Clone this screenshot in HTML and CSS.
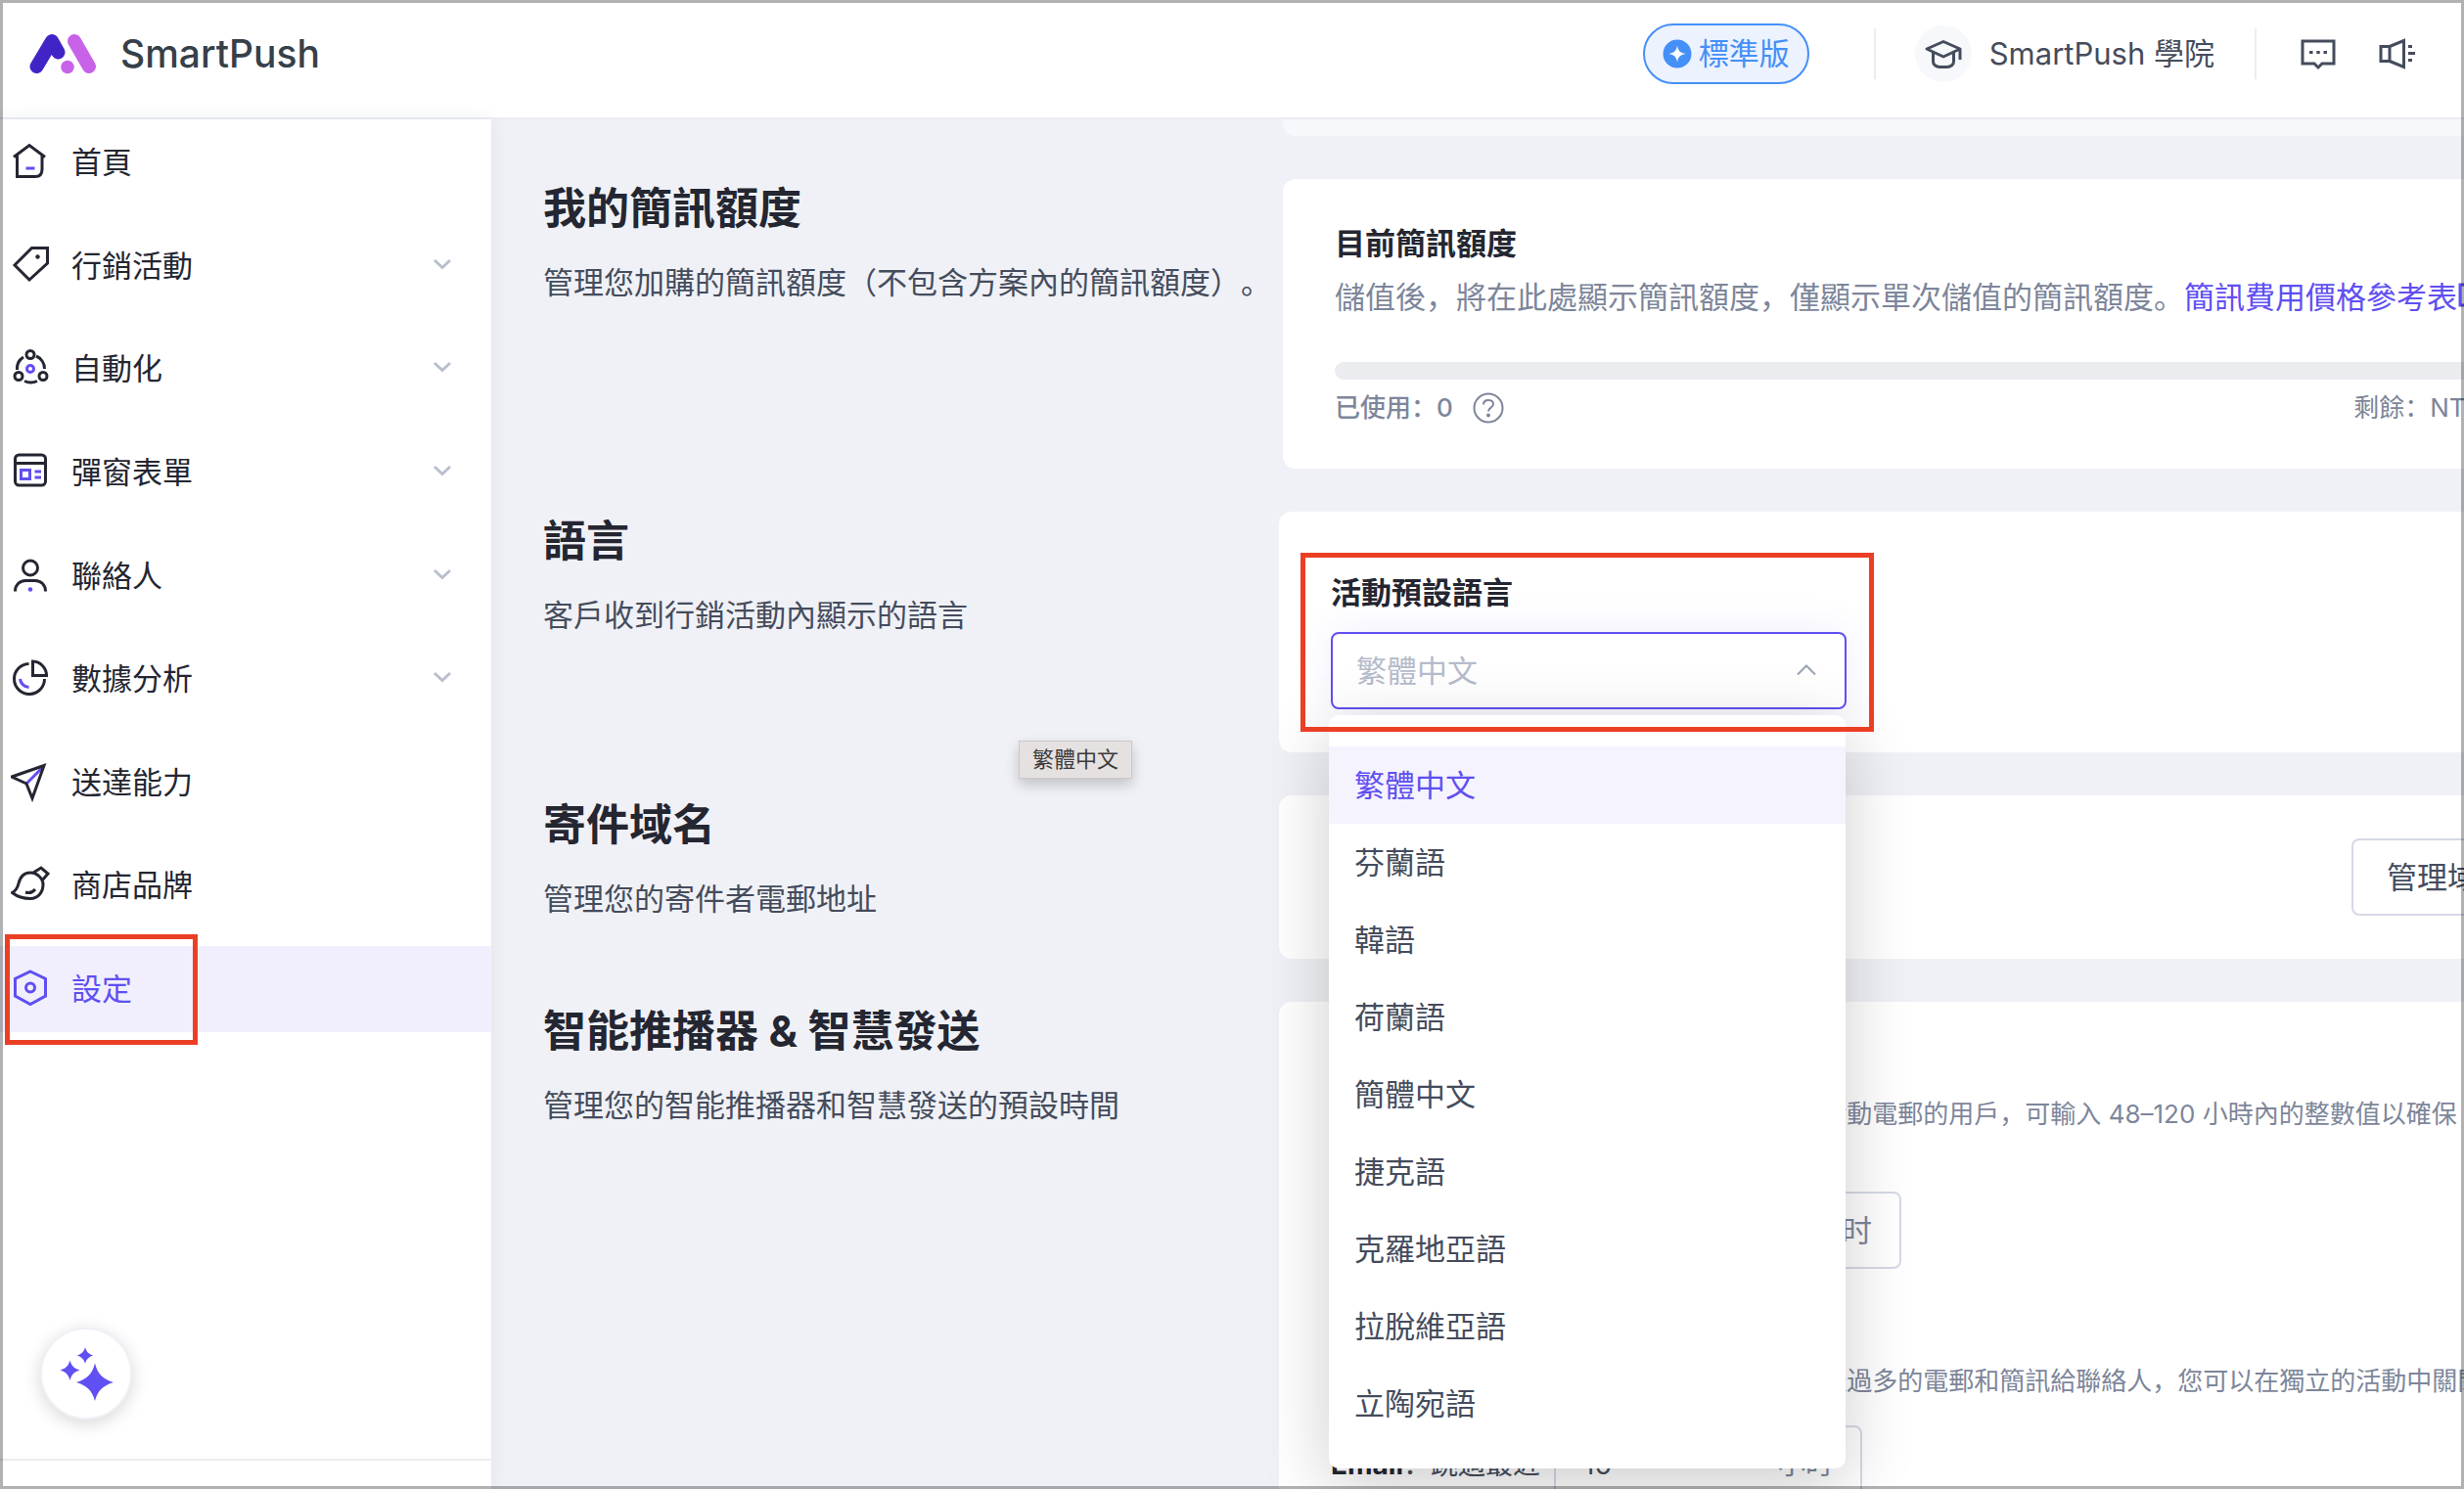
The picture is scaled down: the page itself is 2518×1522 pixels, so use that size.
FILE: index.html
```html
<!DOCTYPE html>
<html lang="zh-Hant">
<head>
<meta charset="utf-8">
<title>SmartPush 設定</title>
<link rel="stylesheet" href="styles.css">
</head>
<body>
<div class="app">
  <header class="topbar">
    <a class="brand" href="#">
      <svg class="brand-mark" width="68" height="42" viewBox="0 0 68 42" fill="none" stroke-width="14" stroke-linecap="round" stroke-linejoin="round" aria-hidden="true">
        <path d="M46 8 61 34" stroke="#c862e8"/><circle cx="39" cy="34.500" r="6.800" fill="#c862e8"/>
        <path d="M7.500 34 23 8 29.500 19.500" stroke="#4224c6"/>
      </svg>
      <span class="brand-name">SmartPush</span>
    </a>
    <div class="topbar-tools">
      <button class="plan" type="button">
        <svg width="30" height="30" viewBox="0 0 30 30" aria-hidden="true"><circle cx="15" cy="15" r="14.500" fill="#458ff8"/><path d="M15 6.500C16 12 18 14 23.500 15 18 16 16 18 15 23.500 14 18 12 16 6.500 15 12 14 14 12 15 6.500Z" fill="#fff"/></svg>
        標準版
      </button>
      <span class="divider"></span>
      <a class="academy" href="#">
        <span class="academy-icon">
          <svg width="40" height="32" viewBox="0 0 40 32" fill="none" stroke="#454c5c" stroke-width="3" stroke-linejoin="round" aria-hidden="true"><path d="M20 3.500 37 11 20 19 3 11ZM37 11V22M9.500 15V24C9.500 27.500 13 29.500 16 29.500H24C27 29.500 30.500 27.500 30.500 24V15"/></svg>
        </span>
        SmartPush 學院
      </a>
      <span class="divider"></span>
      <button class="icon-button" type="button" aria-label="訊息">
        <svg width="38" height="34" viewBox="0 0 38 34" fill="none" stroke="#454c5c" stroke-width="3" aria-hidden="true"><path d="M3 4H35V27H23L19 31 15 27H3Z"/><path d="M10 15.500H13.500M17.300 15.500H20.700M24.500 15.500H28"/></svg>
      </button>
      <button class="icon-button" type="button" aria-label="公告">
        <svg width="40" height="34" viewBox="0 0 40 34" fill="none" stroke="#454c5c" stroke-width="3" aria-hidden="true"><path d="M3 9.500H12V24.500H3ZM12 9.500 26.500 3.500V30.500L12 24.500"/><path d="M31 9.500H35M31 16.500H38M31 23.500H35"/></svg>
      </button>
    </div>
  </header>

  <div class="body">
    <aside class="sidebar">
      <nav class="nav">
        <a class="nav-item" href="#">
          <svg class="nav-icon" viewBox="0 0 40 40"><path d="M3 14.500 19 2.500 35 14.500M6.500 12.500V34.500H25Q32 34.500 32 27V12.500"/><path class="accent" d="M15.500 26H24.500"/></svg>
          首頁
        </a>
        <a class="nav-item" href="#">
          <svg class="nav-icon" viewBox="0 0 40 40"><path d="M21.500 1.500H37.500V17L19 34 4 19Z"/><circle class="dot" cx="27.500" cy="10.500" r="2.200"/></svg>
          行銷活動
          <svg class="chevron" viewBox="0 0 20 12"><path d="M2 2 10 9.500 18 2"/></svg>
        </a>
        <a class="nav-item" href="#">
          <svg class="nav-icon" viewBox="0 0 40 40"><circle cx="20" cy="5.500" r="4"/><circle cx="8" cy="27.500" r="4"/><circle cx="33" cy="27.500" r="4"/><path d="M13 8A14 14 0 0 0 6.500 21M26 7A14 14 0 0 1 34.500 20M14 32.500A15 15 0 0 0 27 32.500"/><circle class="accent" cx="20" cy="20" r="3.500"/></svg>
          自動化
          <svg class="chevron" viewBox="0 0 20 12"><path d="M2 2 10 9.500 18 2"/></svg>
        </a>
        <a class="nav-item" href="#">
          <svg class="nav-icon" viewBox="0 0 40 40"><rect x="4.500" y="2" width="31" height="31" rx="4"/><path d="M5 10.500H35"/><rect class="accent" x="10.500" y="17.500" width="9" height="9"/><path class="accent" d="M24.500 19H31M24.500 25H31"/></svg>
          彈窗表單
          <svg class="chevron" viewBox="0 0 20 12"><path d="M2 2 10 9.500 18 2"/></svg>
        </a>
        <a class="nav-item" href="#">
          <svg class="nav-icon" viewBox="0 0 40 40"><circle cx="20" cy="11.500" r="7.500"/><path d="M4.500 35.500C4.500 29 9 24.500 15 24.500H25C31 24.500 35.500 29 35.500 35.500"/><circle class="accent-dot" cx="20" cy="33.500" r="2.300"/></svg>
          聯絡人
          <svg class="chevron" viewBox="0 0 20 12"><path d="M2 2 10 9.500 18 2"/></svg>
        </a>
        <a class="nav-item" href="#">
          <svg class="nav-icon" viewBox="0 0 40 40"><path d="M18.500 4.500A15.500 15.500 0 1 0 34.500 20"/><path d="M22.500 2A14.500 14.500 0 0 1 36.500 16.500H22.500Z"/><path class="accent" d="M9.500 20A9.500 9.500 0 0 0 18.500 28.500"/></svg>
          數據分析
          <svg class="chevron" viewBox="0 0 20 12"><path d="M2 2 10 9.500 18 2"/></svg>
        </a>
        <a class="nav-item" href="#">
          <svg class="nav-icon" viewBox="0 0 40 40"><path class="accent" d="M16 21 33 4"/><path d="M1 14 34 2.500 22 36 16 21Z"/></svg>
          送達能力
        </a>
        <a class="nav-item" href="#">
          <svg class="nav-icon" viewBox="0 0 40 40"><path d="M1.500 27.500C6 25 7 22 8 18 10 10 15 7 20 7 27 7 33 13 33 19 33 27 28 33.500 20 33.500 12 33.500 6 31 1.500 27.500ZM23 7 31 2 38 8 32 15M15 27Q21 29 25 24"/></svg>
          商店品牌
        </a>
        <a class="nav-item is-active" href="#" aria-current="page">
          <svg class="nav-icon" viewBox="0 0 40 40"><path d="M20 2 35.500 9.500V27L20 35.500 4.500 27V9.500Z"/><circle cx="20" cy="18.500" r="4.500"/></svg>
          設定
          <span class="highlight highlight-nav"></span>
        </a>
      </nav>
      <div class="sidebar-foot">
        <button class="assistant" type="button" aria-label="AI 助理">
          <svg width="56" height="56" viewBox="0 0 56 56" fill="#604ff2" aria-hidden="true"><path d="M37 17.500C40 29 45 33.500 56 37 45 40.500 40 45 37 56 34 45 29 40.500 18 37 29 33.500 34 29 37 17.500ZM11.500 14.500C13 20 16 23 21.500 24.500 16 26 13 29 11.500 35 10 29 7 26 1.500 24.500 7 23 10 20 11.500 14.500ZM27 1C28 5.500 30.500 8 35.500 9.500 30.500 11 28 13.500 27 18 26 13.500 23.500 11 18.500 9.500 23.500 8 26 5.500 27 1Z"/></svg>
        </button>
      </div>
    </aside>

    <main class="content">
      <div class="settings">
        <div class="card-tail"></div>

        <section class="row">
          <div class="intro">
            <h2>我的簡訊額度</h2>
            <p>管理您加購的簡訊額度（不包含方案內的簡訊額度）。</p>
          </div>
          <div class="card card-quota">
            <h3>目前簡訊額度</h3>
            <p class="quota-text">儲值後，將在此處顯示簡訊額度，僅顯示單次儲值的簡訊額度。<a href="#">簡訊費用價格參考表<svg width="30" height="30" viewBox="0 0 30 30" fill="none" stroke="currentColor" stroke-width="3" aria-hidden="true"><path d="M15 6H3V27H25V16M19 3H27V11M27 3 14 16"/></svg></a></p>
            <div class="bar"></div>
            <div class="quota-foot">
              <span class="used">已使用：0
                <svg width="32" height="32" viewBox="0 0 32 32" fill="none" stroke="#7d869a" stroke-width="2" aria-hidden="true"><circle cx="16" cy="16" r="14.500"/><path d="M11 12.500C11 9.500 13 8 16 8 19 8 21 9.800 21 12.300 21 15.500 16 15.800 16 19.500"/><circle cx="16" cy="23.500" r="1" fill="#7d869a"/></svg>
              </span>
              <span>剩餘：NT$ 0.00</span>
            </div>
          </div>
        </section>

        <section class="row">
          <div class="intro">
            <h2>語言</h2>
            <p>客戶收到行銷活動內顯示的語言</p>
          </div>
          <div class="card card-language">
            <label for="language">活動預設語言</label>
            <div class="picker">
              <select id="language"><option>繁體中文</option></select>
              <svg class="picker-arrow" width="22" height="14" viewBox="0 0 22 14" fill="none" stroke="#9ba3b4" stroke-width="2" aria-hidden="true"><path d="M2 11.500 11 2.500 20 11.500"/></svg>
              <ul class="menu">
                <li class="is-selected">繁體中文</li>
                <li>芬蘭語</li>
                <li>韓語</li>
                <li>荷蘭語</li>
                <li>簡體中文</li>
                <li>捷克語</li>
                <li>克羅地亞語</li>
                <li>拉脫維亞語</li>
                <li>立陶宛語</li>
              </ul>
            </div>
            <span class="highlight highlight-language"></span>
            <span class="tooltip" role="tooltip">繁體中文</span>
          </div>
        </section>

        <section class="row">
          <div class="intro">
            <h2>寄件域名</h2>
            <p>管理您的寄件者電郵地址</p>
          </div>
          <div class="card card-domain">
            <button class="button" type="button">管理域名</button>
          </div>
        </section>

        <section class="row">
          <div class="intro">
            <h2>智能推播器 &amp; 智慧發送</h2>
            <p>管理您的智能推播器和智慧發送的預設時間</p>
          </div>
          <div class="card card-smart">
            <p>智能推播器 將自動略過近期已收過您的行銷活動電郵的用戶，可輸入 48–120 小時內的整數值以確保</p>
            <div class="field field-push">
              <input type="text" aria-label="智能推播器時間">
              <span>小时</span>
            </div>
            <p>智慧發送 可避免您在短時間內向同一對象發送過多的電郵和簡訊給聯絡人，您可以在獨立的活動中關閉</p>
            <div class="send-row">
              <label for="email-hours"><b>Email</b>：跳過最近</label>
              <div class="field field-send">
                <input id="email-hours" type="text" value="16">
                <span>小时</span>
              </div>
            </div>
          </div>
        </section>
      </div>
    </main>
  </div>
</div>
</body>
</html>
```
FILE: styles.css
```css
* {
  box-sizing: border-box;
}

body {
  margin: 0;
  font-family: Inter, "Noto Sans CJK SC", sans-serif;
  font-feature-settings: "locl" 0;
  text-spacing-trim: space-all;
  font-size: 31px;
  line-height: 44px;
  color: #454c5c;
  background: #f0f1f6;
}

body::after {
  content: "";
  position: fixed;
  inset: 0;
  border: 3px solid rgba(0, 0, 0, 0.3);
  pointer-events: none;
  z-index: 20;
}

h2, h3, p, ul {
  margin: 0;
  padding: 0;
  font-weight: 400;
}

a {
  color: inherit;
  text-decoration: none;
}

button, input, select {
  font: inherit;
  font-feature-settings: inherit;
  color: inherit;
}

button {
  padding: 0;
  border: 0;
  background: none;
}

svg {
  flex: none;
}

.app {
  display: flex;
  flex-direction: column;
  height: 100vh;
  overflow: hidden;
}

/* Top bar */
.topbar {
  display: flex;
  flex: none;
  justify-content: space-between;
  height: 122px;
  padding: 25px 48px 35px 30px;
  border-bottom: 2px solid #ecedf3;
  background: #fff;
}

.brand,
.topbar-tools,
.plan,
.academy {
  display: flex;
  align-items: center;
}

.brand {
  gap: 25px;
  color: #36404a;
}

.brand-name {
  font-size: 39px;
  font-weight: 500;
}

.plan {
  gap: 7px;
  height: 62px;
  padding: 0 18px;
  border: 2px solid #458ff8;
  border-radius: 31px;
  background: #ecf2fe;
  color: #458ff8;
}

.divider {
  width: 2px;
  height: 52px;
  margin: 0 40px 0 66px;
  background: #ecedf3;
}

.academy {
  gap: 18px;
}

.academy + .divider {
  margin: 0 44px 0 41px;
}

.academy-icon {
  display: grid;
  place-items: center;
  width: 58px;
  height: 58px;
  border-radius: 50%;
  background: #f7f8fc;
}

.icon-button {
  display: flex;
}

.icon-button + .icon-button {
  margin-left: 42px;
}

/* Side navigation */
.body {
  display: flex;
  flex: 1;
  min-height: 0;
}

.sidebar {
  display: flex;
  flex: none;
  flex-direction: column;
  justify-content: space-between;
  width: 502px;
  background: #fff;
  box-shadow: 0 0 18px rgba(30, 40, 70, 0.07);
}

.nav {
  display: flex;
  flex-direction: column;
  justify-content: space-between;
  min-height: 933px;
}

.nav-item {
  position: relative;
  display: flex;
  align-items: center;
  height: 88px;
  padding: 0 40px 0 11px;
  gap: 22px;
  color: #242631;
}

.nav-icon {
  width: 40px;
  height: 40px;
  fill: none;
  stroke: currentColor;
  stroke-width: 3;
}

.nav-icon .accent {
  stroke: #604ff2;
}

.nav-icon .dot {
  fill: currentColor;
  stroke: none;
}

.nav-icon .accent-dot {
  fill: #604ff2;
  stroke: none;
}

.nav-item.is-active {
  background: #f1effd;
  color: #604ff2;
}

.chevron {
  width: 20px;
  height: 12px;
  margin: 0 0 4px auto;
  fill: none;
  stroke: #b9bfce;
  stroke-width: 3;
}

.sidebar-foot {
  padding: 0 41px 40px;
  margin-bottom: 29px;
  border-bottom: 2px solid #ebecf0;
}

.assistant {
  display: grid;
  place-items: center;
  width: 94px;
  height: 94px;
  border: 2px solid #f0f0f8;
  border-radius: 50%;
  background: #fff;
  box-shadow: 0 4px 18px rgba(0, 0, 0, 0.16);
}

/* Settings */
.content {
  flex: 1;
  min-width: 0;
  overflow: hidden;
}

.settings {
  display: flex;
  flex-direction: column;
  gap: 44px;
  margin-right: -134px;
  padding-left: 53px;
}

.card-tail {
  height: 17px;
  margin-left: 756px;
  border-radius: 0 0 13px 13px;
  background: #f7f8fc;
}

.row {
  display: grid;
  grid-template-columns: 752px minmax(0, 1fr);
}

.intro h2 {
  margin-bottom: 24px;
  font-size: 44px;
  line-height: 60px;
  font-weight: 700;
  color: #242631;
}

.intro p {
  white-space: nowrap;
}

.card {
  position: relative;
  border-radius: 13px;
  background: #fff;
  padding: 44px 53px;
}

.card h3,
.card-language label {
  font-size: 31px;
  font-weight: 700;
  color: #242631;
}

.card-quota {
  margin-left: 4px;
}

.quota-text {
  margin: 11px 0 44px;
  color: #7d869a;
  white-space: nowrap;
}

.quota-text a {
  color: #604ff2;
}

.bar {
  height: 18px;
  border-radius: 9px;
  background: #ebecf0;
}

.quota-foot {
  display: flex;
  justify-content: space-between;
  margin-top: 11px;
  font-size: 26px;
  line-height: 36px;
  color: #7d869a;
}

.used {
  display: flex;
  align-items: center;
  gap: 20px;
  font-weight: 500;
}

.card-language {
  padding-top: 61px;
}

.card-language label {
  display: block;
  margin-bottom: 18px;
}

.picker {
  position: relative;
  z-index: 5;
  width: 527px;
}

.picker select {
  display: block;
  width: 100%;
  height: 79px;
  padding: 0 24px;
  border: 2px solid #604ff2;
  border-radius: 8px;
  background: #fff;
  color: #b5bccb;
  appearance: none;
  box-shadow: 0 0 40px rgba(96, 79, 242, 0.1);
}

.picker-arrow {
  position: absolute;
  top: 32px;
  right: 30px;
}

.menu {
  position: absolute;
  top: 85px;
  left: -2px;
  width: 528px;
  padding: 32px 0 27px;
  border-radius: 10px;
  background: #fff;
  box-shadow: 0 18px 70px rgba(0, 0, 0, 0.2);
  list-style: none;
}

.menu li {
  height: 79px;
  padding: 0 26px;
  line-height: 79px;
}

.menu .is-selected {
  background: #f5f3fe;
  color: #604ff2;
}

.card-domain {
  display: flex;
  justify-content: flex-end;
}

.button {
  height: 79px;
  padding: 0 34px;
  border: 2px solid #d6d9e6;
  border-radius: 8px;
  background: #fff;
}

.card-smart {
  padding-top: 97px;
}

.card-smart p {
  font-size: 26px;
  line-height: 36px;
  color: #7d869a;
  white-space: nowrap;
}

.field {
  display: flex;
  align-items: center;
  height: 79px;
  padding: 0 28px;
  border: 2px solid #d6d9e6;
  border-radius: 8px;
  color: #7d869a;
}

.field input {
  flex: 1;
  min-width: 0;
  padding: 0;
  border: 0;
  background: none;
  color: #454c5c;
}

.field-push {
  width: 583px;
  margin: 61px 0 97px;
}

.send-row {
  display: flex;
  align-items: center;
  margin-top: 27px;
}

.send-row label {
  flex: none;
  width: 228px;
  font-size: 28px;
  white-space: nowrap;
}

.send-row b {
  color: #242631;
}

.field-send {
  width: 315px;
  border-radius: 0 8px 8px 0;
  font-size: 28px;
}

/* Callouts and tooltip laid over the page */
.highlight {
  position: absolute;
  z-index: 8;
  border: 5px solid #eb3f25;
  pointer-events: none;
}

.highlight-nav {
  top: -12px;
  left: 5px;
  width: 197px;
  height: 113px;
}

.highlight-language {
  top: 42px;
  left: 22px;
  width: 586px;
  height: 183px;
}

.tooltip {
  position: absolute;
  top: 234px;
  left: -266px;
  padding: 0 13px;
  border: 1px solid #cbc8c9;
  background: #e5e1e0;
  box-shadow: 0 6px 14px rgba(0, 0, 0, 0.2);
  font-size: 22px;
  line-height: 37px;
  color: #3d3b3b;
}
```
